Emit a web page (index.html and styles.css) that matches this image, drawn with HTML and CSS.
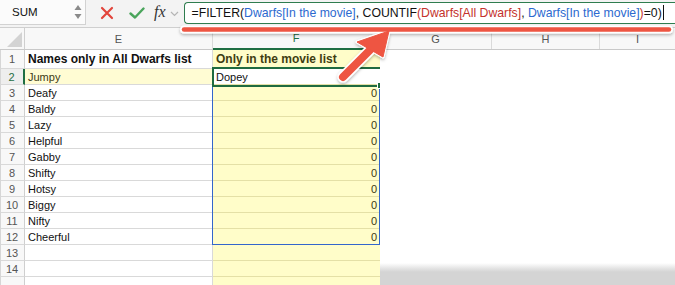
FILE: index.html
```html
<!DOCTYPE html>
<html lang="en">
<head>
    <meta charset="UTF-8">
    <title>Dwarfs - FILTER</title>
    <link rel="stylesheet" href="styles.css">
</head>
<body>
    <div class="toolbar">
        <div class="name-box">
            <span>SUM</span>
            <svg class="spin" width="8" height="16" viewBox="0 0 8 16">
                <path d="M4 1 L7.5 6 L0.5 6 Z" fill="#8a8a8a"/>
                <path d="M4 15 L7.5 10 L0.5 10 Z" fill="#8a8a8a"/>
            </svg>
        </div>
        <div class="actions">
            <svg class="btn" width="14" height="14" viewBox="0 0 14 14">
                <path d="M2 2 L12 12 M12 2 L2 12" stroke="#e2453c" stroke-width="2.2" stroke-linecap="round"/>
            </svg>
            <svg class="btn ok" width="16" height="14" viewBox="0 0 16 14">
                <path d="M1.5 7.5 L6 11.5 L14.5 2.5" stroke="#4aa55c" stroke-width="2.4" fill="none" stroke-linecap="round" stroke-linejoin="round"/>
            </svg>
            <span class="fx">fx</span>
            <svg class="chev" width="9" height="6" viewBox="0 0 9 6">
                <path d="M1 1 L4.5 4.5 L8 1" stroke="#b5b5b5" stroke-width="1.2" fill="none"/>
            </svg>
        </div>
        <div class="formula">=FILTER(<span class="ref-blue">Dwarfs[In the movie]</span>, COUNTIF<span class="ref-red">(Dwarfs[All Dwarfs]</span>, <span class="ref-blue">Dwarfs[In the movie]</span><span class="ref-red">)</span>=0)<span class="caret"></span></div>
    </div>

    <div class="sheet">
        <div class="col-heads">
            <div class="corner"><span class="tri"></span></div>
            <div class="col-head col-e">E</div>
            <div class="col-head col-f active">F</div>
            <div class="col-head col-g">G</div>
            <div class="col-head col-h">H</div>
            <div class="col-head col-i">I</div>
        </div>

        <div class="body">
            <div class="table">
                <div class="row first">
                    <div class="num">1</div>
                    <div class="cell e bold">Names only in All Dwarfs list</div>
                    <div class="cell f bold">Only in the movie list</div>
                </div>
                <div class="row">
                    <div class="num current">2</div>
                    <div class="cell e hilite">Jumpy</div>
                    <div class="cell f white">Dopey</div>
                </div>
                <div class="row"><div class="num">3</div><div class="cell e">Deafy</div><div class="cell f zero">0</div></div>
                <div class="row"><div class="num">4</div><div class="cell e">Baldy</div><div class="cell f zero">0</div></div>
                <div class="row"><div class="num">5</div><div class="cell e">Lazy</div><div class="cell f zero">0</div></div>
                <div class="row"><div class="num">6</div><div class="cell e">Helpful</div><div class="cell f zero">0</div></div>
                <div class="row"><div class="num">7</div><div class="cell e">Gabby</div><div class="cell f zero">0</div></div>
                <div class="row"><div class="num">8</div><div class="cell e">Shifty</div><div class="cell f zero">0</div></div>
                <div class="row"><div class="num">9</div><div class="cell e">Hotsy</div><div class="cell f zero">0</div></div>
                <div class="row"><div class="num">10</div><div class="cell e">Biggy</div><div class="cell f zero">0</div></div>
                <div class="row"><div class="num">11</div><div class="cell e">Nifty</div><div class="cell f zero">0</div></div>
                <div class="row"><div class="num">12</div><div class="cell e">Cheerful</div><div class="cell f zero">0</div></div>
                <div class="row"><div class="num">13</div><div class="cell e"></div><div class="cell f"></div></div>
                <div class="row"><div class="num">14</div><div class="cell e"></div><div class="cell f"></div></div>
                <div class="row"><div class="num"></div><div class="cell e"></div><div class="cell f"></div></div>

                <!-- spill range and selected cell -->
                <div class="spill"></div>
                <div class="selected"><span class="handle"></span></div>
                <span class="spill-dot"></span>
            </div>
            <div class="blank">
                <div class="shade"></div>
            </div>
        </div>
    </div>

    <svg class="callout" width="675" height="285" viewBox="0 0 675 285">
        <defs>
            <filter id="drop" x="-20%" y="-20%" width="140%" height="140%">
                <feDropShadow dx="0" dy="1.5" stdDeviation="1.5" flood-color="#000" flood-opacity="0.3"/>
            </filter>
        </defs>
        <g filter="url(#drop)">
            <line x1="184" y1="29.5" x2="669" y2="29.5" stroke="#fff" stroke-width="8" stroke-linecap="round"/>
            <line x1="343" y1="77" x2="374" y2="46" stroke="#fff" stroke-width="11" stroke-linecap="round"/>
            <path d="M389 31 L357 42 L383 57 Z" fill="#fff" stroke="#fff" stroke-width="3" stroke-linejoin="round"/>
        </g>
        <line x1="184" y1="29.5" x2="669" y2="29.5" stroke="#ee5542" stroke-width="4.5" stroke-linecap="round"/>
        <line x1="343" y1="77" x2="374" y2="46" stroke="#ee5542" stroke-width="8" stroke-linecap="round"/>
        <path d="M389 31 L357 42 L383 57 Z" fill="#ee5542" stroke="#ee5542" stroke-width="1" stroke-linejoin="round"/>
    </svg>
</body>
</html>
```

FILE: styles.css
```css
body {
    margin: 0;
    width: 675px;
    height: 285px;
    overflow: hidden;
    position: relative;
    background: #fff;
    font-family: "Liberation Sans", Arial, sans-serif;
    color: #111;
}

/* formula bar */
.toolbar {
    display: flex;
    height: 28px;
    background: #f3f3f3;
    border-bottom: 1px solid #cfcfcf;
    box-sizing: border-box;
}
.name-box {
    width: 86px;
    height: 25px;
    box-sizing: border-box;
    background: #fbfbfb;
    border-right: 1px solid #d2d2d2;
    border-bottom: 1px solid #d2d2d2;
    display: flex;
    align-items: center;
    justify-content: space-between;
    padding: 0 3px 0 12px;
    font-size: 11.5px;
    color: #111;
}
.actions {
    display: flex;
    align-items: center;
    height: 25px;
    padding-left: 14px;
}
.btn {
    margin-right: 15px;
}
.btn.ok {
    margin-right: 9px;
}
.fx {
    font-family: "Liberation Serif", serif;
    font-style: italic;
    font-size: 16px;
    color: #333;
    margin-top: -1px;
}
.chev {
    margin-left: 4px;
    margin-top: 2px;
}
.formula {
    flex: 1;
    margin: 2px 0 3px 5px;
    background: #fff;
    border: 1px solid #2f7d4f;
    border-right: none;
    border-radius: 4px 0 0 4px;
    padding-left: 7px;
    font-size: 12.25px;
    line-height: 20px;
    white-space: nowrap;
    color: #111;
}
.ref-blue {
    color: #2c69cf;
}
.ref-red {
    color: #c4322c;
}
.caret {
    display: inline-block;
    width: 1px;
    height: 15px;
    background: #111;
    margin-left: 1px;
    vertical-align: -3px;
}

/* column headers */
.col-heads {
    display: flex;
    height: 22px;
    box-sizing: border-box;
    border-bottom: 1px solid #c9c9c9;
    background: #f8f8f8;
    font-size: 11px;
    color: #555;
}
.corner {
    width: 25px;
    border-right: 1px solid #cfcfcf;
    box-sizing: border-box;
    position: relative;
}
.tri {
    position: absolute;
    right: 2px;
    bottom: 2px;
    width: 0;
    height: 0;
    border-left: 15px solid transparent;
    border-bottom: 15px solid #d3d3d3;
}
.col-head {
    display: flex;
    align-items: center;
    justify-content: center;
    box-sizing: border-box;
    border-right: 1px solid #dadada;
}
.col-e { width: 188px; }
.col-f { width: 167px; }
.col-g { width: 112px; }
.col-h { width: 108px; }
.col-i { flex: 1; border-right: none; }
.col-head.active {
    color: #1f6e43;
    border-bottom: 2px solid #1f6e43;
    margin-bottom: -1px;
}

/* cells */
.body {
    display: flex;
    height: 235px;
}
.table {
    width: 380px;
    position: relative;
    overflow: hidden;
}
.row {
    display: flex;
    height: 16px;
    font-size: 11px;
}
.row.first {
    height: 19px;
}
.num {
    width: 25px;
    box-sizing: border-box;
    border-left: 1px solid #d6d6d6;
    border-right: 1px solid #cfcfcf;
    border-bottom: 1px solid #d9d9d9;
    background: #f8f8f8;
    color: #555;
    display: flex;
    align-items: center;
    justify-content: center;
    padding-right: 1px;
}
.num.current {
    color: #1f6e43;
    background: #eeeeee;
    border-right: 2px solid #1f6e43;
}
.cell {
    box-sizing: border-box;
    display: flex;
    align-items: center;
    padding: 0 3px;
    white-space: nowrap;
    overflow: hidden;
}
.cell.e {
    width: 188px;
    border-right: 1px solid #d9d9d9;
    border-bottom: 1px solid #d9d9d9;
}
.cell.f {
    width: 167px;
    background: #fffdc9;
    border-bottom: 1px solid #e4e0a6;
    color: #3c3a14;
}
.cell.bold {
    font-weight: bold;
    font-size: 12px;
    color: #111;
}
.cell.f.bold {
    color: #3f3d12;
}
.cell.hilite {
    background: #fffcd3;
    color: #3c3a14;
}
.cell.white {
    background: #fff;
    color: #111;
}
.cell.zero {
    justify-content: flex-end;
}

.spill {
    position: absolute;
    left: 212px;
    top: 34px;
    width: 168px;
    height: 161px;
    border: 1px solid #3366cc;
    border-top: none;
    box-sizing: border-box;
}
.selected {
    position: absolute;
    left: 212px;
    top: 17px;
    width: 170px;
    height: 20px;
    border: 2.5px solid #1f6b40;
    box-sizing: border-box;
}
.handle {
    position: absolute;
    right: -4px;
    bottom: -4px;
    width: 5px;
    height: 5px;
    background: #1f6b40;
    border: 1px solid #fff;
}
.spill-dot {
    position: absolute;
    left: 382px;
    top: 40px;
    width: 1px;
    height: 1px;
    background: #333;
}

/* empty area to the right */
.blank {
    flex: 1;
    display: flex;
    flex-direction: column;
    justify-content: flex-end;
}
.shade {
    height: 22px;
    background: linear-gradient(#fff 0, #e6e6e6 5px, #d4d4d4 9px, #d4d4d4 100%);
}

.callout {
    position: absolute;
    left: 0;
    top: 0;
    pointer-events: none;
}
```
